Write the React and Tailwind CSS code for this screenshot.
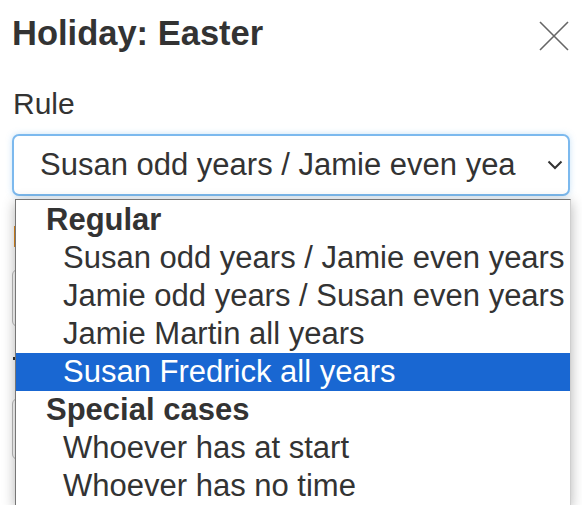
import React from "react";

const regular = [
  "Susan odd years / Jamie even years",
  "Jamie odd years / Susan even years",
  "Jamie Martin all years",
  "Susan Fredrick all years",
];
const special = ["Whoever has at start", "Whoever has no time"];

const App = () => {
  const selected = "Susan Fredrick all years";

  return (
    <div className="relative h-[505px] w-[582px] overflow-hidden bg-white font-['Liberation_Sans',Arial,sans-serif] text-[#333]">
      <div className="px-3 pt-[13px]">
        {/* Header */}
        <div className="flex items-start justify-between">
          <h4 className="text-[34.5px] font-bold leading-[40px]">Holiday: Easter</h4>
          <button className="mt-[8px] mr-[1px] text-[#666]">
            <svg width="30" height="30" viewBox="0 0 30 30">
              <path d="M1 1 L29 29 M29 1 L1 29" stroke="currentColor" strokeWidth="1.6" fill="none" />
            </svg>
          </button>
        </div>

        {/* Rule field */}
        <label className="mt-[34px] block pl-[1px] text-[30px] leading-[34px]">Rule</label>
        <div className="mt-[13px] flex h-[62px] items-center rounded-[7px] border-2 border-[#7cb9ee] bg-white pl-[26px] pr-[5px] shadow-[0_0_6px_rgba(102,175,233,0.35)]">
          <div className="w-[476px] overflow-hidden whitespace-nowrap text-[31px] leading-[34px]">
            Susan odd years / Jamie even years
          </div>
          <div className="flex flex-1 justify-end">
            <svg width="16" height="10" viewBox="0 0 16 10" className="text-[#333]">
              <path d="M1.5 1.5 L8 8 L14.5 1.5" stroke="currentColor" strokeWidth="2" fill="none" />
            </svg>
          </div>
        </div>

        {/* Content under the open list */}
        <div className="mt-[30px] ml-[2px] h-[21px] w-[120px] bg-[#e08a1e]" />
        <div className="mt-[22px] h-[58px] rounded-[6px] border border-[#bbb]" />
        <div className="mt-[30px] ml-[1px] h-[3px] w-[60px] bg-[#333]" />
        <div className="mt-[38px] h-[62px] rounded-[6px] border border-[#bbb]" />
      </div>

      {/* Open dropdown list */}
      <div className="absolute left-[15px] top-[199px] w-[556px] border border-[#767676] border-r-[#cfcfcf] bg-white pt-[1px] text-[31px] leading-[38px] shadow-[0_3px_12px_rgba(0,0,0,0.3)]">
        <div className="h-[38px] pl-[30px] font-bold">Regular</div>
        {regular.map((o) => (
          <div
            key={o}
            className={
              o === selected
                ? "h-[38px] whitespace-nowrap bg-[#1967d2] pl-[47px] text-white"
                : "h-[38px] whitespace-nowrap pl-[47px]"
            }
          >
            {o}
          </div>
        ))}
        <div className="h-[38px] pl-[30px] font-bold">Special cases</div>
        {special.map((o) => (
          <div key={o} className="h-[38px] whitespace-nowrap pl-[47px]">
            {o}
          </div>
        ))}
      </div>
    </div>
  );
};

export default App;
